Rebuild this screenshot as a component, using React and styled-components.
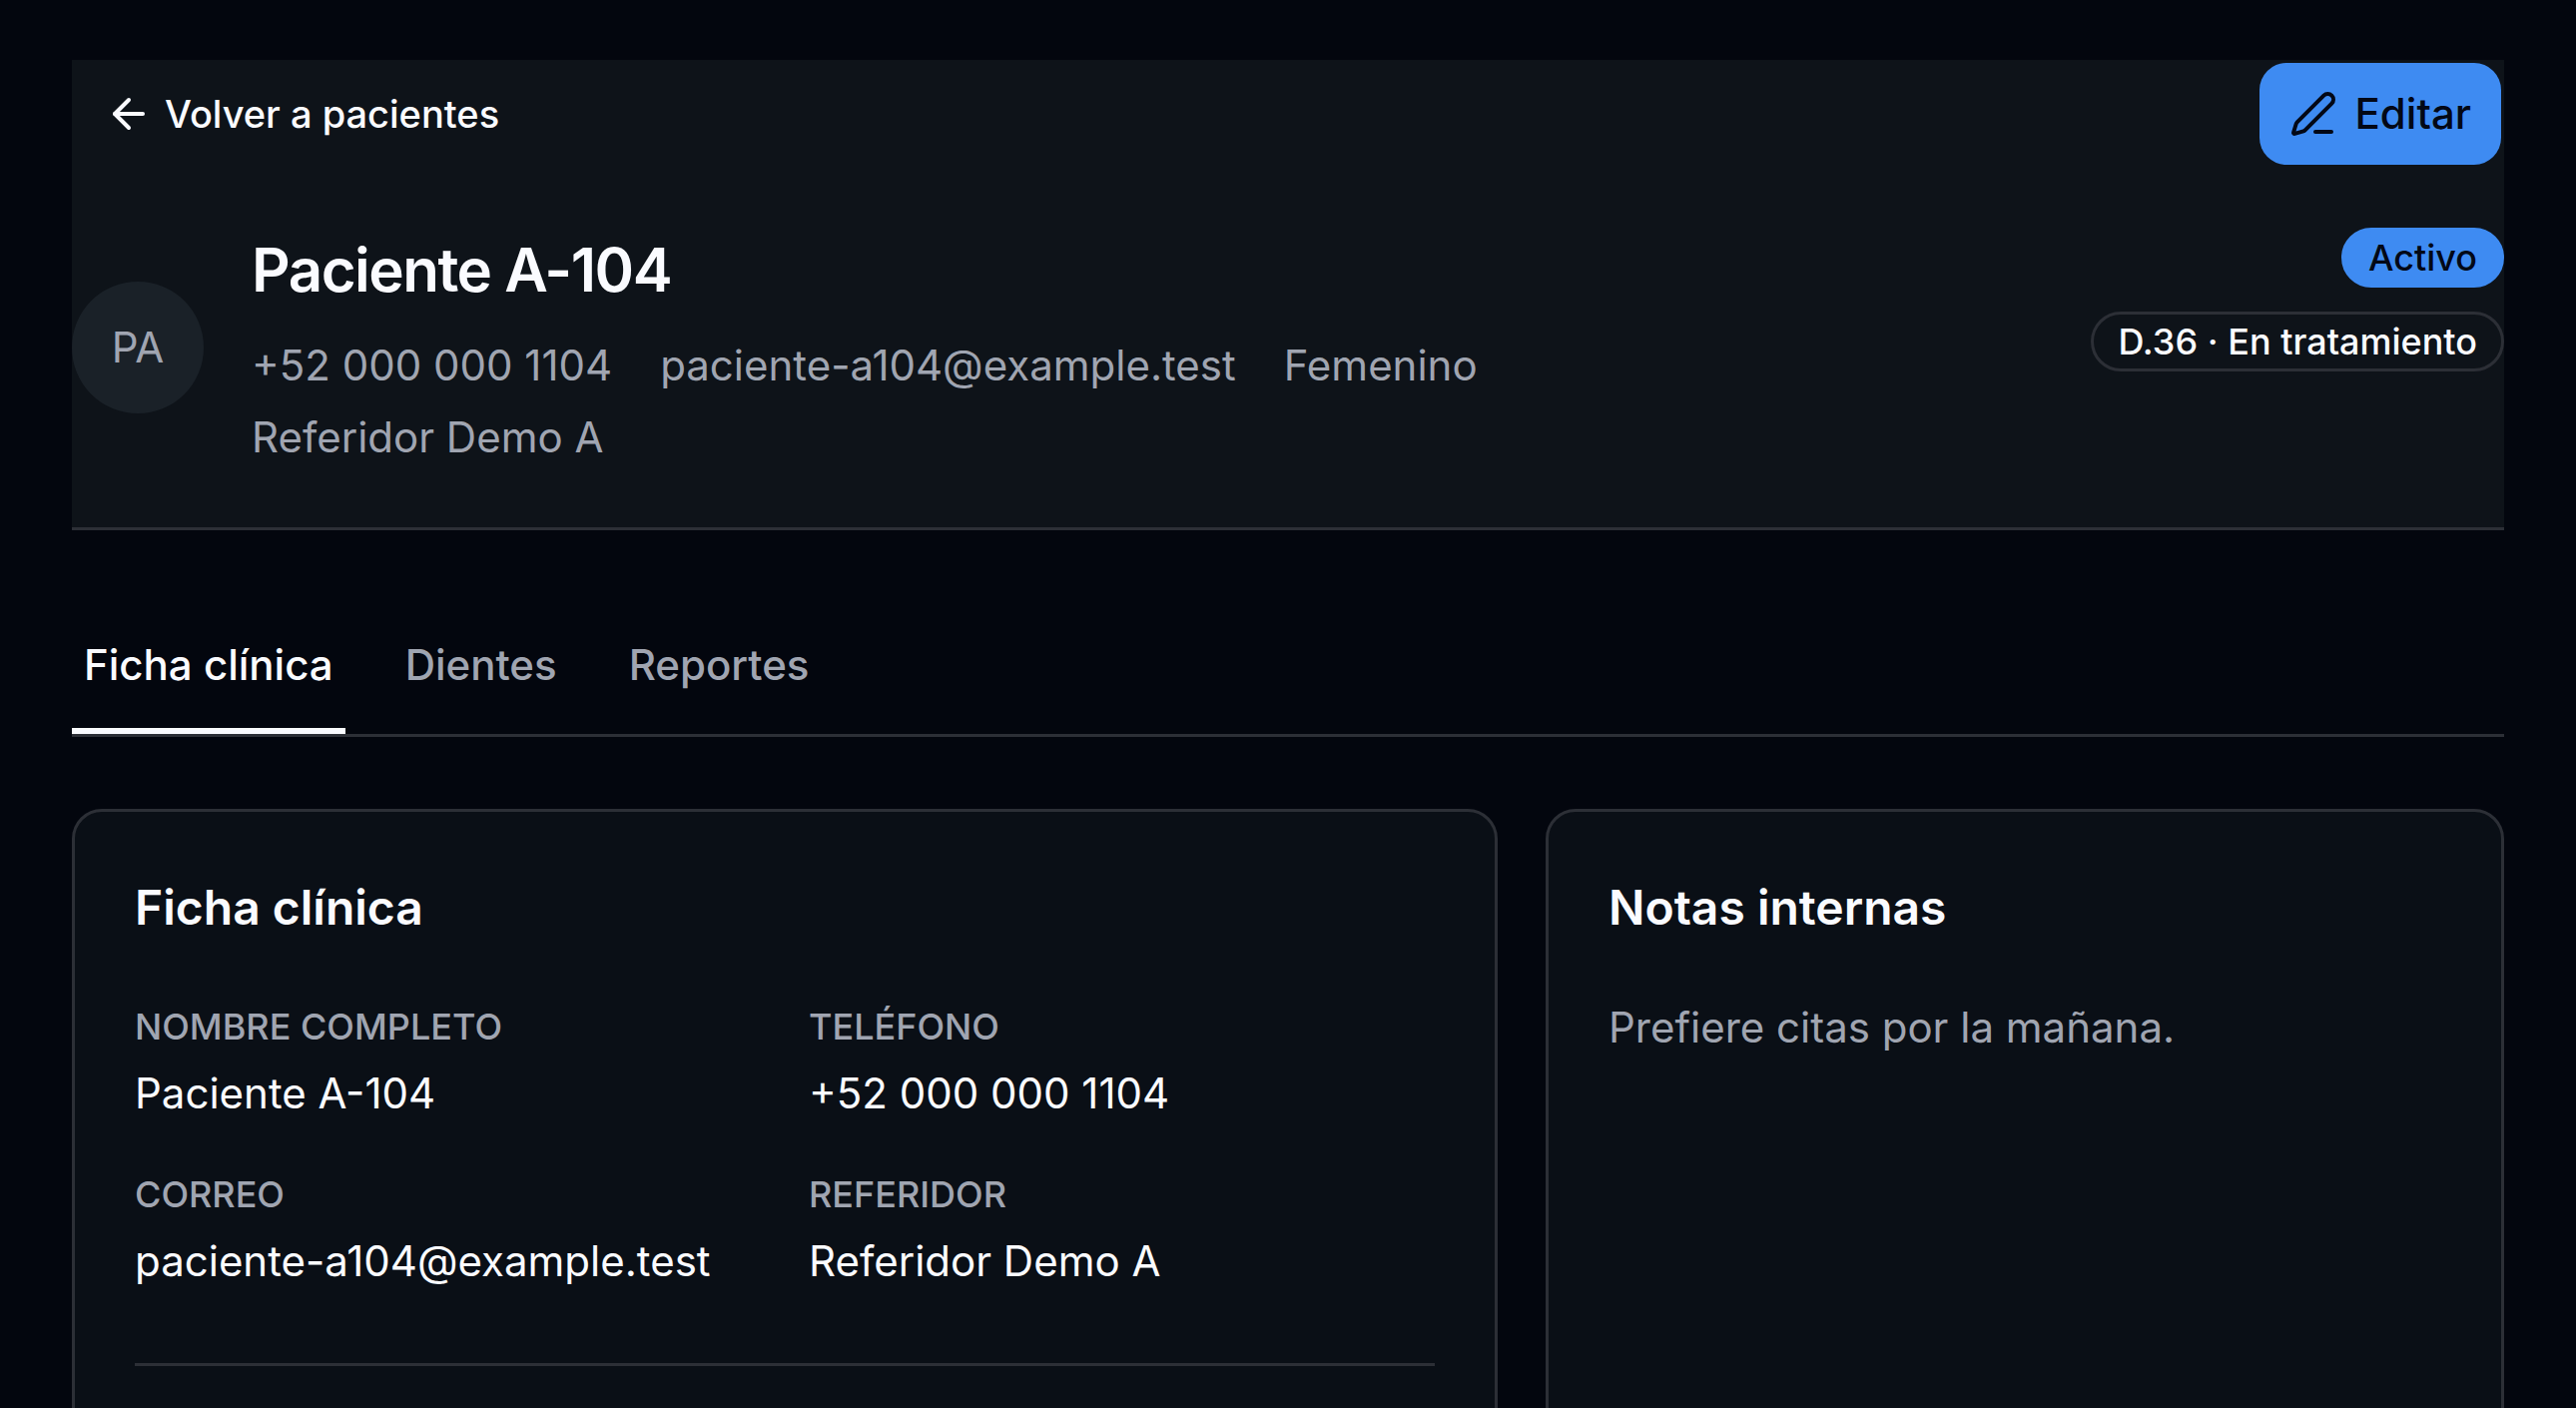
import React, { useState } from 'react';
import styled, { ThemeProvider, createGlobalStyle, css } from 'styled-components';
import { ArrowLeft, PenLine } from 'lucide-react';

const theme = {
  bg: '#03060e',
  header: '#0e1319',
  card: '#0a0f16',
  muted: '#1a2128',
  border: '#2c2f36',
  text: '#fafbff',
  textMuted: '#a0a5b1',
  primary: '#3e8bf2',
  primaryText: '#030816',
};

const GlobalStyle = createGlobalStyle`
  *,
  *::before,
  *::after {
    box-sizing: border-box;
  }

  body {
    margin: 0;
    background: ${theme.bg};
    color: ${theme.text};
    font-family: Inter, 'Liberation Sans', sans-serif;
    font-size: 42px;
    line-height: 60px;
  }

  h1,
  h2,
  p,
  dl,
  dd {
    margin: 0;
  }
`;

const Page = styled.main`
  display: flex;
  flex-direction: column;
  gap: 72px;
  height: 100vh;
  padding: 60px 72px;
  overflow-y: auto;
  scrollbar-width: none;
`;

const Header = styled.header`
  display: flex;
  flex-shrink: 0;
  flex-direction: column;
  gap: 60px;
  padding-bottom: 60px;
  border-bottom: 3px solid ${({ theme }) => theme.border};
  background: ${({ theme }) => theme.header};
`;

const HeaderRow = styled.div`
  display: flex;
  align-items: center;
  justify-content: space-between;
  gap: 48px;
`;

const BackLink = styled.a`
  display: inline-flex;
  align-items: center;
  gap: 12px;
  padding: 0 33px;
  color: ${({ theme }) => theme.text};
  font-size: 38px;
  font-weight: 500;
  text-decoration: none;
`;

const EditButton = styled.button`
  display: inline-flex;
  align-items: center;
  gap: 18px;
  height: 108px;
  padding: 0 30px;
  border: 3px solid transparent;
  border-radius: 30px;
  background: ${({ theme }) => theme.primary};
  background-clip: padding-box;
  color: ${({ theme }) => theme.primaryText};
  font: inherit;
  font-weight: 500;
  cursor: pointer;
`;

const Profile = styled.div`
  display: flex;
  flex: 1;
  align-items: center;
  gap: 48px;
  min-width: 0;
`;

const Avatar = styled.div`
  display: flex;
  flex-shrink: 0;
  align-items: center;
  justify-content: center;
  width: 132px;
  height: 132px;
  border-radius: 50%;
  background: ${({ theme }) => theme.muted};
  color: ${({ theme }) => theme.textMuted};
`;

const ProfileInfo = styled.div`
  display: flex;
  flex-direction: column;
  gap: 24px;
`;

const Name = styled.h1`
  font-size: 60px;
  font-weight: 600;
  line-height: 84px;
  letter-spacing: -0.025em;
`;

const Meta = styled.div`
  display: flex;
  flex-wrap: wrap;
  gap: 12px 48px;
  max-width: 1500px;
  color: ${({ theme }) => theme.textMuted};
`;

const Badges = styled.div`
  display: flex;
  flex-direction: column;
  align-items: flex-end;
  align-self: flex-start;
  gap: 24px;
`;

const Badge = styled.span`
  display: inline-flex;
  align-items: center;
  height: 60px;
  padding: 0 24px;
  border: 3px solid ${({ theme }) => theme.border};
  border-radius: 30px;
  font-size: 36px;
  font-weight: 500;
  line-height: 48px;

  ${({ $solid, theme }) =>
    $solid &&
    css`
      border-color: ${theme.primary};
      background: ${theme.primary};
      color: ${theme.primaryText};
    `}
`;

const TabList = styled.div`
  display: flex;
  flex-shrink: 0;
  gap: 48px;
  border-bottom: 3px solid ${({ theme }) => theme.border};
`;

const Tab = styled.button`
  height: 132px;
  padding: 0 12px;
  border: 0;
  border-bottom: 6px solid transparent;
  background: none;
  color: ${({ theme }) => theme.textMuted};
  font: inherit;
  font-weight: 500;
  cursor: pointer;

  &[aria-selected='true'] {
    border-color: ${({ theme }) => theme.text};
    color: ${({ theme }) => theme.text};
  }
`;

const Cards = styled.div`
  display: grid;
  flex-shrink: 0;
  grid-template-columns: minmax(0, 3fr) minmax(960px, 2fr);
  gap: 48px;
`;

const Card = styled.section`
  padding: 60px;
  border: 3px solid ${({ theme }) => theme.border};
  border-radius: 30px;
  background: ${({ theme }) => theme.card};
`;

const CardTitle = styled.h2`
  font-size: 48px;
  font-weight: 600;
  line-height: 72px;
`;

const Fields = styled.dl`
  display: grid;
  grid-template-columns: 1fr 1fr;
  gap: 48px;
  margin: 60px 0;
  padding-bottom: 72px;
  border-bottom: 3px solid ${({ theme }) => theme.border};
`;

const Field = styled.div`
  display: flex;
  flex-direction: column;
  gap: 14px;
`;

const FieldLabel = styled.dt`
  color: ${({ theme }) => theme.textMuted};
  font-size: 36px;
  font-weight: 500;
  line-height: 46px;
  text-transform: uppercase;
`;

const Notes = styled.p`
  margin-top: 48px;
  color: ${({ theme }) => theme.textMuted};
  line-height: 72px;
`;

const tabs = ['Ficha clínica', 'Dientes', 'Reportes'];

const patient = {
  initials: 'PA',
  name: 'Paciente A-104',
  phone: '+52 000 000 1104',
  email: 'paciente-a104@example.test',
  gender: 'Femenino',
  referrer: 'Referidor Demo A',
  status: 'Activo',
  stage: 'D.36 · En tratamiento',
  notes: 'Prefiere citas por la mañana.',
};

const fields = [
  { label: 'Nombre completo', value: patient.name },
  { label: 'Teléfono', value: patient.phone },
  { label: 'Correo', value: patient.email },
  { label: 'Referidor', value: patient.referrer },
];

const App = () => {
  const [activeTab, setActiveTab] = useState(tabs[0]);

  return (
    <ThemeProvider theme={theme}>
      <GlobalStyle />
      <Page>
        <Header>
          <HeaderRow>
            <BackLink href="#pacientes">
              <ArrowLeft size={48} aria-hidden="true" />
              Volver a pacientes
            </BackLink>
            <EditButton type="button">
              <PenLine size={48} aria-hidden="true" />
              Editar
            </EditButton>
          </HeaderRow>
          <HeaderRow>
            <Profile>
              <Avatar>{patient.initials}</Avatar>
              <ProfileInfo>
                <Name>{patient.name}</Name>
                <Meta>
                  <span>{patient.phone}</span>
                  <span>{patient.email}</span>
                  <span>{patient.gender}</span>
                  <span>{patient.referrer}</span>
                </Meta>
              </ProfileInfo>
            </Profile>
            <Badges>
              <Badge $solid>{patient.status}</Badge>
              <Badge>{patient.stage}</Badge>
            </Badges>
          </HeaderRow>
        </Header>

        <TabList role="tablist">
          {tabs.map(tab => (
            <Tab
              key={tab}
              type="button"
              role="tab"
              aria-selected={tab === activeTab}
              onClick={() => setActiveTab(tab)}
            >
              {tab}
            </Tab>
          ))}
        </TabList>

        <Cards>
          <Card>
            <CardTitle>Ficha clínica</CardTitle>
            <Fields>
              {fields.map(({ label, value }) => (
                <Field key={label}>
                  <FieldLabel>{label}</FieldLabel>
                  <dd>{value}</dd>
                </Field>
              ))}
            </Fields>
          </Card>
          <Card>
            <CardTitle>Notas internas</CardTitle>
            <Notes>{patient.notes}</Notes>
          </Card>
        </Cards>
      </Page>
    </ThemeProvider>
  );
};

export default App;
